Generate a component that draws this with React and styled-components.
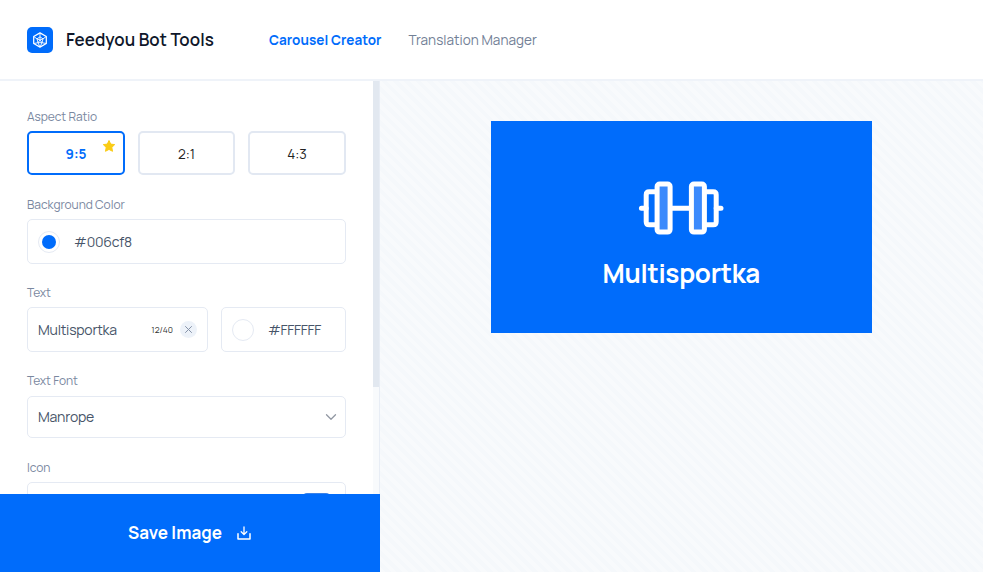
import React from "react";
import styled, { createGlobalStyle } from "styled-components";

const BLUE = "#006cfb";

const GlobalStyle = createGlobalStyle`
  * { box-sizing: border-box; }
  body { margin: 0; font-family: Manrope, Inter, "Open Sans", sans-serif; color: #475569; background: #fff; }
  button { font-family: inherit; margin: 0; padding: 0; cursor: pointer; }
  svg { display: block; flex: none; }
`;

const Page = styled.div`
  display: flex;
  flex-direction: column;
  width: 100%;
  height: 572px;
  overflow: hidden;
`;

const Header = styled.header`
  display: flex;
  align-items: center;
  flex: none;
  height: 81px;
  padding-left: 27px;
  border-bottom: 2px solid #eff3f9;
`;

const Logo = styled.div`
  display: grid;
  place-items: center;
  width: 26px;
  height: 26px;
  border-radius: 5px;
  background: ${BLUE};
`;

const Title = styled.h1`
  width: 203px;
  margin: 0 0 0 13px;
  font-size: 17px;
  line-height: 24px;
  font-weight: 650;
  letter-spacing: 0.04px;
  color: #0f172a;
  white-space: nowrap;
`;

const NavLink = styled.a`
  width: ${(p) => p.$width}px;
  font-size: 13.5px;
  line-height: 20px;
  white-space: nowrap;
  font-weight: ${(p) => (p.$active ? 700 : 400)};
  letter-spacing: ${(p) => (p.$active ? 0.04 : 0.04)}px;
  color: ${(p) => (p.$active ? BLUE : "#728096")};
`;

const Body = styled.div`
  display: flex;
  flex: 1;
  min-height: 0;
`;

const Sidebar = styled.aside`
  display: flex;
  flex-direction: column;
  flex: none;
  width: 380px;
  border-right: 1px solid #e8edf5;
`;

const ScrollArea = styled.div`
  display: flex;
  flex: 1;
  min-height: 0;
  overflow: hidden;
`;

const Form = styled.div`
  width: 373px;
  padding: 26px 27px 0;
`;

const ScrollTrack = styled.div`
  width: 6px;
  background: #f8fafc;
`;

const ScrollThumb = styled.div`
  height: 306px;
  background: #e2e8f0;
`;

const Field = styled.section`
  height: ${(p) => p.$height || 88}px;
`;

const Label = styled.div`
  height: ${(p) => p.$height || 24}px;
  padding-top: 1px;
  font-size: 12px;
  line-height: 18px;
  letter-spacing: -0.06px;
  color: #7a889f;
  white-space: nowrap;
`;

const RatioRow = styled.div`
  display: grid;
  grid-template-columns: 98px 97px 98px;
  column-gap: 13px;
`;

const RatioButton = styled.button`
  position: relative;
  height: 44px;
  padding-top: 2px;
  border: 2px solid ${(p) => (p.$active ? BLUE : "#e2e8f2")};
  border-radius: 5px;
  background: #fff;
  color: ${(p) => (p.$active ? BLUE : "#222")};
  font-size: 13.5px;
  font-weight: ${(p) => (p.$active ? 700 : 400)};
`;

const StarBadge = styled.span`
  position: absolute;
  top: 6px;
  right: 7px;
`;

const Split = styled.div`
  display: grid;
  grid-template-columns: 181px 125px;
  column-gap: 13px;
`;

const Box = styled.div`
  display: flex;
  align-items: center;
  height: ${(p) => p.$height || 45}px;
  padding: 0 10px;
  border: 1px solid #e5eaf3;
  border-radius: 5px;
  background: #fff;
`;

const Value = styled.span`
  font-size: 14px;
  line-height: 20px;
  letter-spacing: ${(p) => p.$spacing || -0.22}px;
  color: #475569;
  white-space: nowrap;
`;

const Swatch = styled.span`
  display: grid;
  place-items: center;
  flex: none;
  width: 22px;
  height: 22px;
  margin-right: 14px;
  border: 1px solid #e5eaf3;
  border-radius: 50%;

  &::after {
    content: "";
    width: 14px;
    height: 14px;
    border-radius: 50%;
    background: ${(p) => p.$color};
  }
`;

const Counter = styled.span`
  margin-left: auto;
  font-size: 8.5px;
  line-height: 12px;
  color: #333;
`;

const ClearButton = styled.button`
  display: grid;
  place-items: center;
  width: 17px;
  height: 17px;
  margin-left: 7px;
  border: 0;
  border-radius: 50%;
  background: #edf2f9;
`;

const ChevronSlot = styled.span`
  margin: 0 -2px 0 auto;
`;

const IconPreview = styled.span`
  width: 22px;
  height: 22px;
  border: 1px solid #e5eaf3;
  border-radius: 50%;
`;

const IconToggle = styled.span`
  width: 27px;
  height: 23px;
  margin: 0 5px 0 auto;
  border-radius: 4px;
  background: #3b82e8;
`;

const SaveButton = styled.button`
  display: flex;
  align-items: center;
  justify-content: center;
  gap: 15px;
  flex: none;
  width: 380px;
  height: 78px;
  padding-right: 1px;
  border: 0;
  background: ${BLUE};
  color: #fff;
  font-size: 17px;
  font-weight: 700;
`;

const SaveLabel = styled.span`
  margin-top: -2px;
  white-space: nowrap;
`;

const Canvas = styled.main`
  flex: 1;
  padding: 40px 0 0 110.6px;
  background: repeating-linear-gradient(45deg, #f8fafc 0 4px, #f5f8fb 4px 8px);
`;

const PreviewCard = styled.div`
  display: flex;
  flex-direction: column;
  align-items: center;
  width: 381.4px;
  height: 212px;
  padding-top: 60px;
  background: ${BLUE};
`;

const CardText = styled.div`
  margin-top: 20.5px;
  font-size: 26px;
  line-height: 34px;
  font-weight: 700;
  letter-spacing: -0.3px;
  color: #fff;
  white-space: nowrap;
`;

const LogoMark = () => (
  <svg width="16" height="16" viewBox="0 0 16 16" fill="none" stroke="#fff" strokeLinejoin="round">
    <path d="M8 .9 14.3 4.5v7L8 15.1l-6.3-3.6v-7Z" strokeWidth="1.25" />
    <path d="M8 4.8 11 6.9 10 10.7H6L5 6.9ZM8 1v3.8M14.2 4.5 11 6.9M1.8 4.5 5 6.9M1.8 11.5 6 10.7M14.2 11.5 10 10.7M8 4.8V8M5 6.9 8 8l3-1.1M6 10.7 8 8l2 2.7M6 10.7 8 15l2-4.3" strokeWidth="0.9" />
  </svg>
);

const Star = () => (
  <svg width="14" height="14" viewBox="0 0 14 14">
    <path d="m7 1.5 1.7 3.6 4 .5-2.9 2.8.7 3.9L7 10.4l-3.5 1.9.7-3.9-2.9-2.8 4-.5Z" fill="#facc15" stroke="#facc15" strokeLinejoin="round" />
  </svg>
);

const Cross = () => (
  <svg width="9" height="9" viewBox="0 0 9 9" fill="none" stroke="#8592a8" strokeLinecap="round">
    <path d="m1.5 1.5 6 6m0-6-6 6" />
  </svg>
);

const Chevron = () => (
  <svg width="12" height="8" viewBox="0 0 12 8" fill="none" stroke="#9298a3" strokeWidth="1.3" strokeLinecap="round" strokeLinejoin="round">
    <path d="m1.5 1.8 4.5 4.4 4.5-4.4" />
  </svg>
);

const Download = () => (
  <svg width="14" height="14" viewBox="0 0 14 14" fill="none" stroke="#fff" strokeLinecap="round" strokeLinejoin="round">
    <path d="M7 1v7.4M4.2 5.8 7 8.6l2.8-2.8" strokeWidth="1.3" />
    <path d="M1 7.7V13h12V7.7" strokeWidth="1.5" />
  </svg>
);

const Dumbbell = () => (
  <svg width="86" height="54" viewBox="-0.2 -0.3 86 54" fill="none" stroke="#fff" strokeWidth="5" strokeLinecap="round" strokeLinejoin="round">
    <path d="M3.2 27H8M78 27h4.8M33 27h20" />
    <path d="M18 10.5h-7q-3 0-3 3v27q0 3 3 3h7M68 10.5h7q3 0 3 3v27q0 3-3 3h-7" />
    <rect x="18.9" y="2.8" width="13" height="48" rx="2.5" fill="#3b8afc" />
    <rect x="53.2" y="2.8" width="13" height="48" rx="2.5" fill="#3b8afc" />
  </svg>
);

export default function App() {
  return (
    <Page>
      <GlobalStyle />
      <Header>
        <Logo><LogoMark /></Logo>
        <Title>Feedyou Bot Tools</Title>
        <NavLink $active $width={139.5}>Carousel Creator</NavLink>
        <NavLink $width={140}>Translation Manager</NavLink>
      </Header>
      <Body>
        <Sidebar>
          <ScrollArea>
            <Form>
              <Field>
                <Label>Aspect Ratio</Label>
                <RatioRow>
                  <RatioButton $active>9:5<StarBadge><Star /></StarBadge></RatioButton>
                  <RatioButton>2:1</RatioButton>
                  <RatioButton>4:3</RatioButton>
                </RatioRow>
              </Field>
              <Field>
                <Label>Background Color</Label>
                <Box><Swatch $color={BLUE} /><Value>#006cf8</Value></Box>
              </Field>
              <Field>
                <Label>Text</Label>
                <Split>
                  <Box>
                    <Value>Multisportka</Value>
                    <Counter>12/40</Counter>
                    <ClearButton aria-label="Clear text"><Cross /></ClearButton>
                  </Box>
                  <Box><Swatch $color="#fff" /><Value $spacing={-0.3}>#FFFFFF</Value></Box>
                </Split>
              </Field>
              <Field $height={87}>
                <Label $height={25}>Text Font</Label>
                <Box $height={42}><Value>Manrope</Value><ChevronSlot><Chevron /></ChevronSlot></Box>
              </Field>
              <Field>
                <Label>Icon</Label>
                <Box><IconPreview /><IconToggle /></Box>
              </Field>
            </Form>
            <ScrollTrack><ScrollThumb /></ScrollTrack>
          </ScrollArea>
          <SaveButton><SaveLabel>Save Image</SaveLabel><Download /></SaveButton>
        </Sidebar>
        <Canvas>
          <PreviewCard>
            <Dumbbell />
            <CardText>Multisportka</CardText>
          </PreviewCard>
        </Canvas>
      </Body>
    </Page>
  );
}
